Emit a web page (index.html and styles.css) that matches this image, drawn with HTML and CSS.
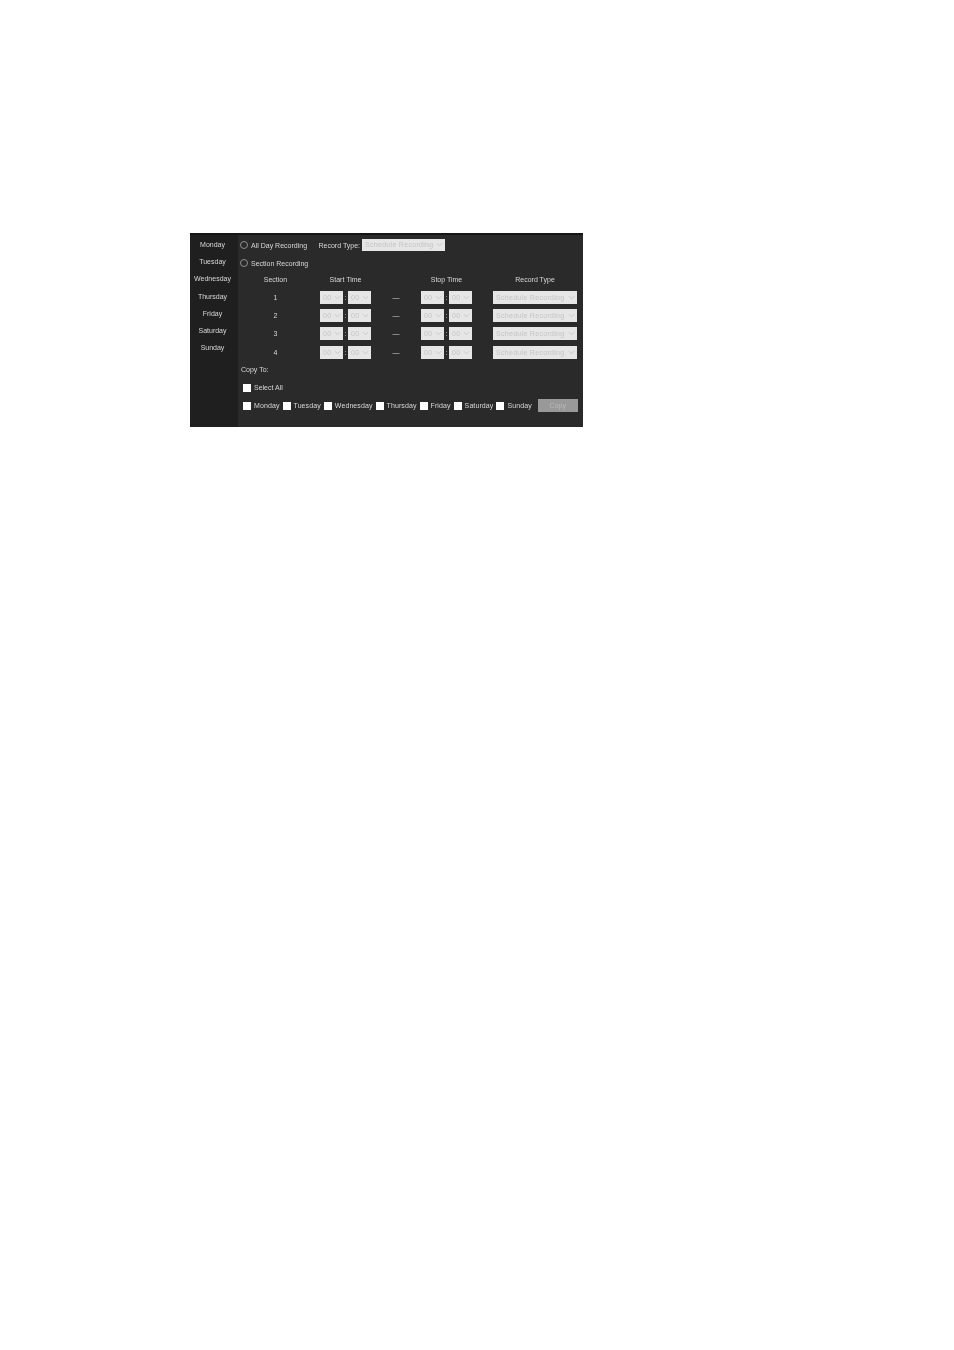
FILE: index.html
```html
<!DOCTYPE html>
<html lang="en">
<head>
<meta charset="utf-8">
<title>Recording Schedule</title>
<link rel="stylesheet" href="styles.css">
</head>
<body>
<div class="panel">
  <nav class="days">
    <div class="day">Monday</div>
    <div class="day">Tuesday</div>
    <div class="day">Wednesday</div>
    <div class="day">Thursday</div>
    <div class="day">Friday</div>
    <div class="day">Saturday</div>
    <div class="day">Sunday</div>
  </nav>
  <main class="main">
    <div class="mode mode-first">
      <span class="radio"></span><span class="mode-label">All Day Recording</span>
      <span class="type-label">Record Type:</span>
      <span class="select select-top"><span class="val">Schedule Recording</span><svg class="chev" viewBox="0 0 8 5"><path d="M1 1l3 3 3-3"/></svg></span>
    </div>
    <div class="mode">
      <span class="radio"></span><span class="mode-label">Section Recording</span>
    </div>
    <div class="grid head">
      <span>Section</span><span>Start Time</span><span></span><span>Stop Time</span><span class="last">Record Type</span>
    </div>
    <div class="grid row">
      <span>1</span>
      <span class="times"><span class="select small"><span class="val">00</span><svg class="chev" viewBox="0 0 8 5"><path d="M1 1l3 3 3-3"/></svg></span><i>:</i><span class="select small"><span class="val">00</span><svg class="chev" viewBox="0 0 8 5"><path d="M1 1l3 3 3-3"/></svg></span></span>
      <span>—</span>
      <span class="times"><span class="select small"><span class="val">00</span><svg class="chev" viewBox="0 0 8 5"><path d="M1 1l3 3 3-3"/></svg></span><i>:</i><span class="select small"><span class="val">00</span><svg class="chev" viewBox="0 0 8 5"><path d="M1 1l3 3 3-3"/></svg></span></span>
      <span class="last"><span class="select wide"><span class="val">Schedule Recording</span><svg class="chev" viewBox="0 0 8 5"><path d="M1 1l3 3 3-3"/></svg></span></span>
    </div>
    <div class="grid row">
      <span>2</span>
      <span class="times"><span class="select small"><span class="val">00</span><svg class="chev" viewBox="0 0 8 5"><path d="M1 1l3 3 3-3"/></svg></span><i>:</i><span class="select small"><span class="val">00</span><svg class="chev" viewBox="0 0 8 5"><path d="M1 1l3 3 3-3"/></svg></span></span>
      <span>—</span>
      <span class="times"><span class="select small"><span class="val">00</span><svg class="chev" viewBox="0 0 8 5"><path d="M1 1l3 3 3-3"/></svg></span><i>:</i><span class="select small"><span class="val">00</span><svg class="chev" viewBox="0 0 8 5"><path d="M1 1l3 3 3-3"/></svg></span></span>
      <span class="last"><span class="select wide"><span class="val">Schedule Recording</span><svg class="chev" viewBox="0 0 8 5"><path d="M1 1l3 3 3-3"/></svg></span></span>
    </div>
    <div class="grid row">
      <span>3</span>
      <span class="times"><span class="select small"><span class="val">00</span><svg class="chev" viewBox="0 0 8 5"><path d="M1 1l3 3 3-3"/></svg></span><i>:</i><span class="select small"><span class="val">00</span><svg class="chev" viewBox="0 0 8 5"><path d="M1 1l3 3 3-3"/></svg></span></span>
      <span>—</span>
      <span class="times"><span class="select small"><span class="val">00</span><svg class="chev" viewBox="0 0 8 5"><path d="M1 1l3 3 3-3"/></svg></span><i>:</i><span class="select small"><span class="val">00</span><svg class="chev" viewBox="0 0 8 5"><path d="M1 1l3 3 3-3"/></svg></span></span>
      <span class="last"><span class="select wide"><span class="val">Schedule Recording</span><svg class="chev" viewBox="0 0 8 5"><path d="M1 1l3 3 3-3"/></svg></span></span>
    </div>
    <div class="grid row">
      <span>4</span>
      <span class="times"><span class="select small"><span class="val">00</span><svg class="chev" viewBox="0 0 8 5"><path d="M1 1l3 3 3-3"/></svg></span><i>:</i><span class="select small"><span class="val">00</span><svg class="chev" viewBox="0 0 8 5"><path d="M1 1l3 3 3-3"/></svg></span></span>
      <span>—</span>
      <span class="times"><span class="select small"><span class="val">00</span><svg class="chev" viewBox="0 0 8 5"><path d="M1 1l3 3 3-3"/></svg></span><i>:</i><span class="select small"><span class="val">00</span><svg class="chev" viewBox="0 0 8 5"><path d="M1 1l3 3 3-3"/></svg></span></span>
      <span class="last"><span class="select wide"><span class="val">Schedule Recording</span><svg class="chev" viewBox="0 0 8 5"><path d="M1 1l3 3 3-3"/></svg></span></span>
    </div>
    <div class="copy-to">Copy To:</div>
    <div class="check-row"><span class="check"></span><span class="check-label">Select All</span></div>
    <div class="check-row week">
      <span class="check"></span><span class="check-label">Monday</span>
      <span class="check"></span><span class="check-label">Tuesday</span>
      <span class="check"></span><span class="check-label">Wednesday</span>
      <span class="check"></span><span class="check-label">Thursday</span>
      <span class="check"></span><span class="check-label">Friday</span>
      <span class="check"></span><span class="check-label">Saturday</span>
      <span class="check"></span><span class="check-label">Sunday</span>
      <span class="copy-btn">Copy</span>
    </div>
  </main>
</div>
</body>
</html>
```
FILE: styles.css
```css
html, body {
  margin: 0;
  background: #fff;
}
body {
  height: 1350px;
  padding: 233px 0 0 190px;
  box-sizing: border-box;
  font-family: "Liberation Sans", Arial, sans-serif;
  font-size: 7px;
  color: #d8d8d8;
}
.panel {
  display: flex;
  width: 393px;
  height: 194px;
  background: #2a2a2a;
  border-top: 2px solid #161616;
  box-sizing: border-box;
  filter: blur(0.4px);
}
.days {
  width: 48px;
  flex: none;
  background: #1f1f1f;
  padding: 1px 3px 0 0;
  box-sizing: border-box;
}
.day {
  height: 17.2px;
  line-height: 17.2px;
  text-align: center;
  white-space: nowrap;
}
.main {
  flex: 1;
  min-width: 0;
  display: flex;
  flex-direction: column;
}
.mode {
  display: flex;
  align-items: center;
  height: 18px;
  padding-left: 2px;
  white-space: nowrap;
}
.mode-first {
  margin-top: 1px;
}
.radio {
  width: 6px;
  height: 6px;
  border: 1px solid #8f8f8f;
  border-radius: 50%;
  margin-right: 3px;
  flex: none;
}
.mode-label {
  width: 67.5px;
  flex: none;
}
.type-label {
  flex: none;
  margin-right: 2px;
}
.select {
  display: flex;
  align-items: center;
  justify-content: space-between;
  height: 13px;
  box-sizing: border-box;
  background: #e6e6e6;
  color: #c4c4c4;
  padding: 0 2px 0 3px;
  white-space: nowrap;
  letter-spacing: 0.3px;
}
.select-top {
  width: 83px;
  height: 12px;
  margin-top: -1px;
}
.small {
  width: 23px;
}
.wide {
  width: 84px;
}
.chev {
  width: 7px;
  height: 5px;
  flex: none;
  fill: none;
  stroke: #c4c4c4;
  stroke-width: 1;
}
.grid {
  display: grid;
  grid-template-columns: 75px 65px 36px 65px 104px;
  align-items: center;
  justify-items: center;
  white-space: nowrap;
}
.head {
  height: 14px;
  margin-bottom: 2px;
}
.row {
  height: 18.3px;
}
.last {
  padding-left: 8px;
}
.times {
  display: flex;
  align-items: center;
}
.times i {
  width: 5px;
  text-align: center;
  font-style: normal;
}
.copy-to {
  height: 18px;
  line-height: 18px;
  padding-left: 3px;
}
.check-row {
  display: flex;
  align-items: center;
  height: 17.6px;
  padding-left: 5px;
  white-space: nowrap;
}
.check {
  width: 8px;
  height: 8px;
  background: #fff;
  flex: none;
  margin-right: 3px;
}
.check-label {
  margin-right: 3px;
}
.week .check-label {
  letter-spacing: 0.1px;
}
.copy-btn {
  width: 40px;
  height: 13px;
  line-height: 14px;
  background: #999;
  color: #b8b8b8;
  text-align: center;
  margin-left: 3px;
}
```
